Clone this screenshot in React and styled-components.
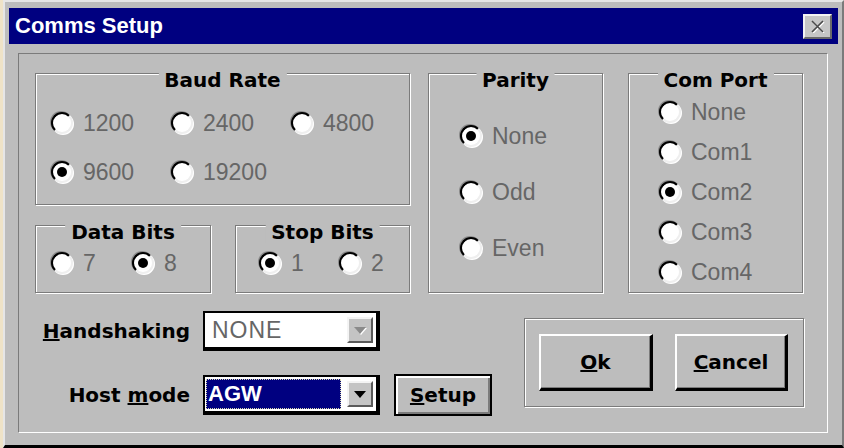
import React from 'react'
import styled, { createGlobalStyle, css } from 'styled-components'

// Windows 95 style "Comms Setup" dialog

const GlobalStyle = createGlobalStyle`
  html, body { margin: 0; padding: 0; }
  body {
    width: 844px;
    height: 448px;
    overflow: hidden;
    background: #efe3c7;
    font-family: "Liberation Sans", Arial, sans-serif;
  }
`

const BOLD = `"DejaVu Sans", "Liberation Sans", sans-serif`
const FACE = '#bdbdbd'
const SHADOW = '#7b7b7b'

const Window = styled.div`
  box-sizing: border-box;
  margin-left: 3px;
  width: 841px;
  height: 448px;
  background: ${FACE};
  border-top: 2px solid #e6e6e6;
  border-left: 2px solid #e6e6e6;
  border-right: 2px solid ${SHADOW};
  border-bottom: 3px solid #000;
  padding: 6px 4px 0 4px;
  display: flex;
  flex-direction: column;
`

const TitleBar = styled.div`
  height: 36px;
  flex: none;
  background: #000080;
  display: flex;
  align-items: center;
  justify-content: space-between;
  padding: 0 6px;
`

const TitleText = styled.span`
  color: #fff;
  font: bold 22px "Liberation Sans", Arial, sans-serif;
`

const CloseButton = styled.div`
  box-sizing: border-box;
  width: 29px;
  height: 25px;
  background: #c6c6c6;
  border-style: solid;
  border-width: 2px;
  border-color: #f2f2f2 #6a6a6a #6a6a6a #f2f2f2;
  display: flex;
  align-items: center;
  justify-content: center;
`

const Frame = styled.div`
  box-sizing: border-box;
  margin: 9px 10px 0 9px;
  height: 380px;
  border: 1px solid;
  border-color: ${SHADOW} #fff #fff ${SHADOW};
  padding: 19px 23px 0 16px;
`

const TopRow = styled.div`
  display: grid;
  grid-template-columns: 393px 200px 175px;
  align-items: start;
`

const LeftColumn = styled.div`
  display: flex;
  flex-direction: column;
  gap: 20px;
`

const BitsRow = styled.div`
  display: flex;
  gap: 24px;
`

const Group = styled.div`
  position: relative;
  box-sizing: border-box;
  width: ${p => p.$w}px;
  height: ${p => p.$h}px;
  border: 1px solid ${SHADOW};
  box-shadow: inset 1px 1px 0 #fff, 1px 1px 0 #fff;
  padding: ${p => p.$pad};
`

const Legend = styled.span`
  position: absolute;
  top: -5px;
  left: 50%;
  transform: translateX(-50%);
  padding: 0 6px;
  background: ${FACE};
  color: #000;
  white-space: nowrap;
  font: bold 20px/22px ${BOLD};
`

const OptionGrid = styled.div`
  display: grid;
  grid-template-columns: repeat(${p => p.$cols}, ${p => p.$colw}px);
  row-gap: 21px;
`

const OptionColumn = styled.div`
  display: flex;
  flex-direction: column;
  gap: ${p => p.$gap}px;
`

const Option = styled.label`
  display: flex;
  align-items: center;
  gap: 10px;
  height: 28px;
  font-size: 23px;
  color: #666;
  white-space: nowrap;
`

const Circle = styled.span`
  box-sizing: border-box;
  flex: none;
  width: 22px;
  height: 22px;
  border-radius: 50%;
  background: #fff;
  border: 2px solid;
  border-color: #000 #efefef #efefef #000;
  box-shadow: 1px 1px 0 #fff, -1px -1px 0 #8a8a8a;
  display: flex;
  align-items: center;
  justify-content: center;

  &::after {
    content: '';
    width: 10px;
    height: 10px;
    border-radius: 50%;
    background: ${p => (p.$on ? '#000' : 'transparent')};
  }
`

const BottomRow = styled.div`
  margin-top: 18px;
  display: flex;
  justify-content: space-between;
  align-items: flex-start;
`

const FieldGrid = styled.div`
  display: grid;
  grid-template-columns: 155px 177px auto;
  column-gap: 13px;
  row-gap: 23px;
  align-items: center;
`

const FieldLabel = styled.span`
  justify-self: end;
  font: bold 20px ${BOLD};
  color: #000;
  white-space: nowrap;
`

const Combo = styled.div`
  box-sizing: border-box;
  width: 177px;
  height: 40px;
  background: #fff;
  border-style: solid;
  border-color: #000;
  border-width: 2px 4px 4px 2px;
  padding-right: 3px;
  display: flex;
  align-items: center;
`

const ComboText = styled.div`
  flex: 1;
  ${p =>
    p.$selected
      ? css`
          box-sizing: border-box;
          height: 30px;
          margin: 0 6px 0 1px;
          padding-left: 2px;
          background: #000080;
          outline: 1px dotted #d8d8b0;
          outline-offset: -1px;
          color: #fff;
          font: bold 22px/30px "Liberation Sans", Arial, sans-serif;
        `
      : css`
          padding-left: 7px;
          color: #666;
          font-size: 23px;
          letter-spacing: 1px;
        `}
`

const DropButton = styled.div`
  box-sizing: border-box;
  flex: none;
  width: 26px;
  height: 26px;
  background: #c4c4c4;
  border: 2px solid;
  border-color: #f4f4f4 #5a5a5a #5a5a5a #f4f4f4;
  display: flex;
  align-items: center;
  justify-content: center;

  &::after {
    content: '';
    border-left: 6px solid transparent;
    border-right: 6px solid transparent;
    border-top: 7px solid ${p => (p.$disabled ? '#8a8a8a' : '#000')};
    filter: ${p => (p.$disabled ? 'drop-shadow(1px 1px 0 #fff)' : 'none')};
  }
`

const SetupButton = styled.div`
  box-sizing: border-box;
  width: 98px;
  height: 42px;
  margin-left: 1px;
  border: 2px solid #000;
  background: ${FACE};
  box-shadow: inset 2px 2px 0 #fff, inset -2px -2px 0 ${SHADOW};
  display: flex;
  align-items: center;
  justify-content: center;
  font: bold 20px ${BOLD};
`

const ButtonBox = styled.div`
  box-sizing: border-box;
  width: 280px;
  height: 89px;
  margin-top: 7px;
  border: 1px solid ${SHADOW};
  box-shadow: inset 1px 1px 0 #fff, 1px 1px 0 #fff;
  padding: 15px 0 0 14px;
  display: flex;
  gap: 22px;
`

const PushButton = styled.div`
  box-sizing: border-box;
  width: ${p => p.$w}px;
  height: 57px;
  background: ${FACE};
  border-style: solid;
  border-width: 2px 3px 3px 2px;
  border-color: #fff #000 #000 #fff;
  box-shadow: inset -1px -1px 0 ${SHADOW};
  display: flex;
  align-items: center;
  justify-content: center;
  font: bold 20px ${BOLD};
  color: #000;
`

const Radio = ({ label, on }) => (
  <Option>
    <Circle $on={on} />
    {label}
  </Option>
)

const CloseIcon = () => (
  <svg width="15" height="13" viewBox="0 0 15 13">
    <path d="M3 2 L14 13 M14 2 L3 13" stroke="#fff" strokeWidth="1.5" fill="none" />
    <path d="M2 1 L13 12 M13 1 L2 12" stroke="#4a4a4a" strokeWidth="1.6" fill="none" />
  </svg>
)

const App = () => {
  return (
    <>
      <GlobalStyle />
      <Window>
        <TitleBar>
          <TitleText>Comms Setup</TitleText>
          <CloseButton>
            <CloseIcon />
          </CloseButton>
        </TitleBar>

        <Frame>
          <TopRow>
            <LeftColumn>
              <Group $w={375} $h={132} $pad="35px 0 0 15px">
                <Legend>Baud Rate</Legend>
                <OptionGrid $cols={3} $colw={120}>
                  <Radio label="1200" />
                  <Radio label="2400" />
                  <Radio label="4800" />
                  <Radio label="9600" on />
                  <Radio label="19200" />
                </OptionGrid>
              </Group>
              <BitsRow>
                <Group $w={176} $h={68} $pad="23px 0 0 15px">
                  <Legend>Data Bits</Legend>
                  <OptionGrid $cols={2} $colw={81}>
                    <Radio label="7" />
                    <Radio label="8" on />
                  </OptionGrid>
                </Group>
                <Group $w={175} $h={68} $pad="23px 0 0 23px">
                  <Legend>Stop Bits</Legend>
                  <OptionGrid $cols={2} $colw={80}>
                    <Radio label="1" on />
                    <Radio label="2" />
                  </OptionGrid>
                </Group>
              </BitsRow>
            </LeftColumn>

            <Group $w={175} $h={220} $pad="48px 0 0 31px">
              <Legend>Parity</Legend>
              <OptionColumn $gap={28}>
                <Radio label="None" on />
                <Radio label="Odd" />
                <Radio label="Even" />
              </OptionColumn>
            </Group>

            <Group $w={175} $h={220} $pad="24px 0 0 30px">
              <Legend>Com Port</Legend>
              <OptionColumn $gap={12}>
                <Radio label="None" />
                <Radio label="Com1" />
                <Radio label="Com2" on />
                <Radio label="Com3" />
                <Radio label="Com4" />
              </OptionColumn>
            </Group>
          </TopRow>

          <BottomRow>
            <FieldGrid>
              <FieldLabel>
                <u>H</u>andshaking
              </FieldLabel>
              <Combo>
                <ComboText>NONE</ComboText>
                <DropButton $disabled />
              </Combo>
              <span />

              <FieldLabel>
                Host <u>m</u>ode
              </FieldLabel>
              <Combo>
                <ComboText $selected>AGW</ComboText>
                <DropButton />
              </Combo>
              <SetupButton>
                <span>
                  <u>S</u>etup
                </span>
              </SetupButton>
            </FieldGrid>

            <ButtonBox>
              <PushButton $w={114}>
                <span>
                  <u>O</u>k
                </span>
              </PushButton>
              <PushButton $w={113}>
                <span>
                  <u>C</u>ancel
                </span>
              </PushButton>
            </ButtonBox>
          </BottomRow>
        </Frame>
      </Window>
    </>
  )
}

export default App
